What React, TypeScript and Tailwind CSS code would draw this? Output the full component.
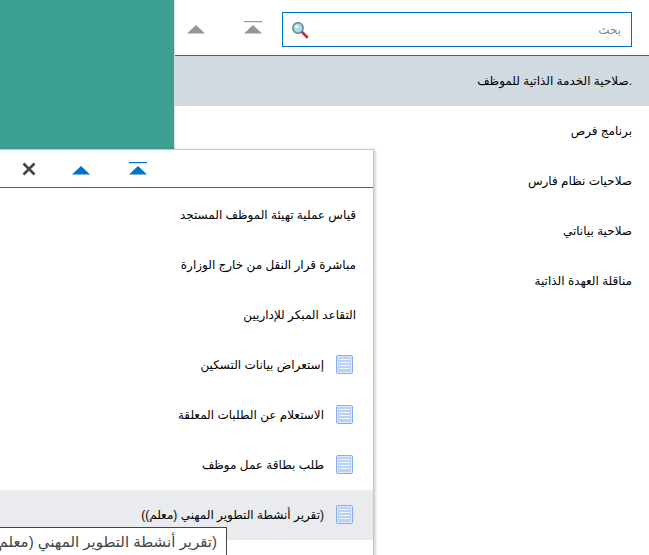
const topItems = [
  ".صلاحية الخدمة الذاتية للموظف",
  "برنامج فرص",
  "صلاحيات نظام فارس",
  "صلاحية بياناتي",
  "مناقلة العهدة الذاتية",
];

const popupLinks = [
  "قياس عملية تهيئة الموظف المستجد",
  "مباشرة قرار النقل من خارج الوزارة",
  "التقاعد المبكر للإداريين",
];

const popupDocs = [
  "إستعراض بيانات التسكين",
  "الاستعلام عن الطلبات المعلقة",
  "طلب بطاقة عمل موظف",
  "(تقرير أنشطة التطوير المهني (معلم))",
];

const UpIcon = ({ color }: { color: string }) => (
  <svg width="18" height="14" viewBox="0 0 18 14">
    <path d="M0 12.5 L9 4 L18 12.5 Z" fill={color} />
  </svg>
);

const TopIcon = ({ color }: { color: string }) => (
  <svg width="18" height="14" viewBox="0 0 18 14">
    <rect x="0" y="0" width="18" height="1.2" fill={color} />
    <path d="M0 12.5 L9 4 L18 12.5 Z" fill={color} />
  </svg>
);

const DocIcon = () => (
  <svg width="18" height="20" viewBox="0 0 18 20">
    <rect x="0.5" y="0.5" width="16" height="18" rx="1.5" fill="#dfeafb" stroke="#86ade8" />
    <rect x="2" y="2" width="13" height="15" fill="#b9d1f6" />
    <path d="M3 4.5 H14 M3 7.5 H14 M3 10.5 H14 M3 13.5 H14" stroke="#f1f6ff" strokeWidth="1.2" />
  </svg>
);

const SearchIcon = () => (
  <svg width="18" height="18" viewBox="0 0 18 18">
    <path d="M10.5 10.5 L16 16" stroke="#b8353a" strokeWidth="2.6" strokeLinecap="round" />
    <circle cx="7" cy="7" r="5.2" fill="#a9dde6" stroke="#5f7f8c" strokeWidth="1.4" />
    <circle cx="5.8" cy="5.6" r="1.8" fill="#e4f6f9" />
  </svg>
);

export default function App() {
  return (
    <div
      dir="ltr"
      className="relative flex h-[555px] w-[649px] overflow-hidden bg-white font-['Liberation_Sans','DejaVu_Sans',sans-serif] text-xs text-black"
    >
      <aside className="w-[174px] shrink-0">
        <div className="h-[149px] bg-[#3ba193]" />
      </aside>

      <main className="flex-1 border-l border-[#dddddd]">
        <header className="flex h-[56px] items-start gap-[20px] border-b border-[#1b75bc] pl-[12px] pr-[17px] pt-[12px]">
          <div className="mt-[9px] flex gap-[39px]">
            <UpIcon color="#969696" />
            <TopIcon color="#969696" />
          </div>
          <div className="flex h-[35px] flex-1 items-center justify-between border border-[#0072c6] pl-[8px] pr-[10px]">
            <SearchIcon />
            <span dir="rtl" className="text-[#8a8a8a]">بحث</span>
          </div>
        </header>
        <ul dir="rtl">
          {topItems.map((item, i) => (
            <li
              key={item}
              className={`flex h-[50px] items-center pr-[17px] ${i === 0 ? "bg-[#d2dae1]" : ""}`}
            >
              {item}
            </li>
          ))}
        </ul>
      </main>

      {/* flyout over the green panel */}
      <div className="absolute left-[-2px] top-[149px] h-[420px] w-[376px] border border-[#c6c6c6] bg-white shadow-[1px_1px_3px_rgba(0,0,0,0.25)]">
        <div className="flex h-[38px] items-center gap-[36px] border-b border-[#1b75bc] pl-[23px]">
          <svg width="14" height="14" viewBox="0 0 14 14">
            <path d="M1.5 1.5 L12.5 12.5 M12.5 1.5 L1.5 12.5" stroke="#444444" strokeWidth="2.6" />
          </svg>
          <UpIcon color="#0072c6" />
          <div className="ml-[3px]">
            <TopIcon color="#0072c6" />
          </div>
        </div>
        <ul dir="rtl" className="pt-[2px]">
          {popupLinks.map((item) => (
            <li key={item} className="flex h-[50px] items-center pr-[17px]">
              {item}
            </li>
          ))}
          {popupDocs.map((item, i) => (
            <li
              key={item}
              className={`flex h-[50px] items-center gap-[12px] pr-[19px] ${i === 3 ? "bg-[#e9ebee]" : ""}`}
            >
              <DocIcon />
              <span>{item}</span>
            </li>
          ))}
        </ul>
      </div>

      {/* tooltip for the hovered row */}
      <div
        dir="rtl"
        className="absolute right-[422px] top-[527px] h-[40px] whitespace-nowrap border border-[#444444] bg-white pl-[4px] pr-[9px] pt-[4px] text-[15px] leading-[20px] text-[#444444]"
      >
        (تقرير أنشطة التطوير المهني (معلم))
      </div>
    </div>
  );
}
